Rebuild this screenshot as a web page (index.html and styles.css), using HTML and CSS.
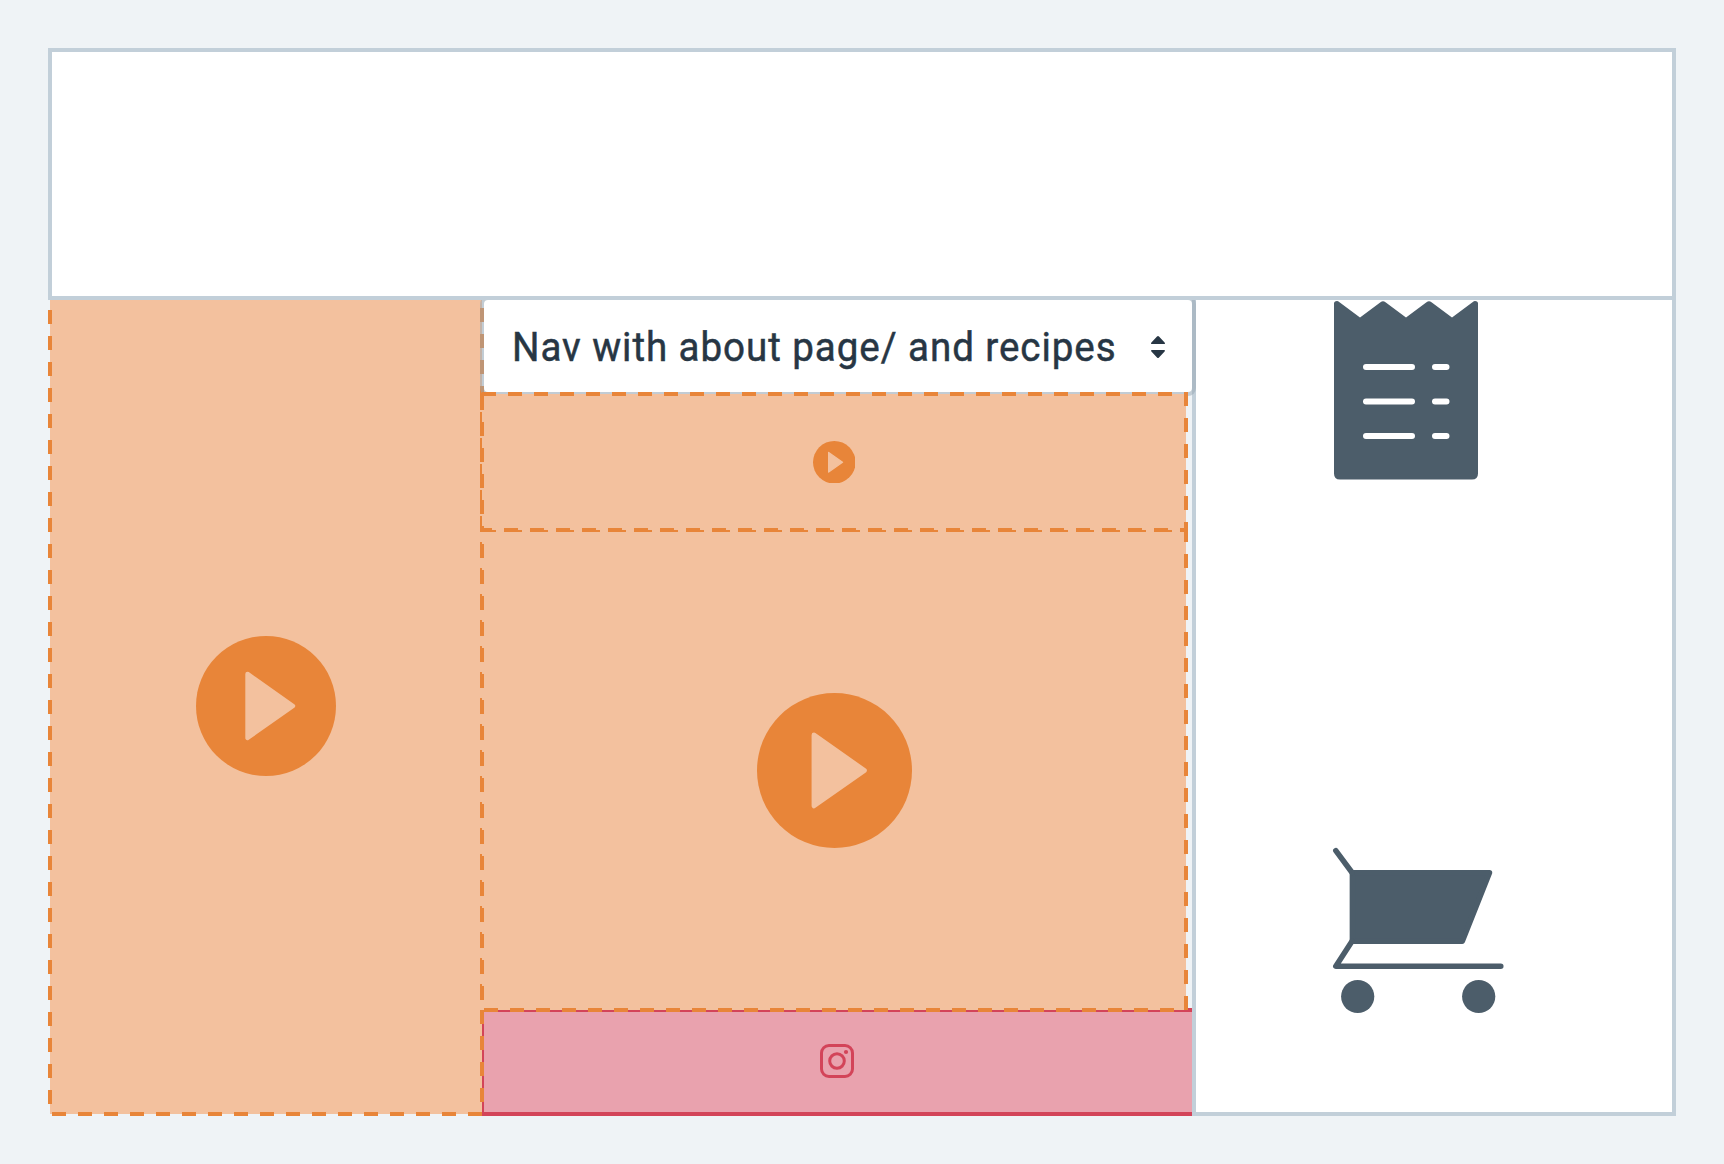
FILE: index.html
```html
<!DOCTYPE html>
<html lang="en">
<head>
<meta charset="utf-8">
<title>Wireframe</title>
<link rel="stylesheet" href="styles.css">
</head>
<body>
<svg class="defs" width="0" height="0" aria-hidden="true">
  <symbol id="play" viewBox="0 0 140 140">
    <circle class="play-disc" cx="70" cy="70" r="70"/>
    <path class="play-arrow" d="M51.5 37.9 97 70 51.5 101.9Z"/>
  </symbol>
</svg>
<main class="board">
  <header class="banner"></header>
  <div class="body">
    <section class="panel video side">
      <svg class="dashes" width="432" height="814">
        <path d="M0 10V814"/>
        <path d="M432 8V814"/>
        <path d="M2 814H432"/>
      </svg>
      <svg class="play" width="140" height="140"><use href="#play"/></svg>
    </section>
    <div class="middle">
      <nav class="select">
        <span class="select-label">Nav with about page/ and recipes</span>
        <svg class="caret" width="14" height="22" viewBox="0 0 14 22">
          <path d="M6 .5Q7-.5 8 .5L13.6 6.5Q14.6 8 13 8H1Q-.6 8 .4 6.5ZM6 21.5Q7 22.5 8 21.5L13.6 15.5Q14.6 14 13 14H1Q-.6 14 .4 15.5Z"/>
        </svg>
      </nav>
      <section class="panel video strip">
        <svg class="dashes" width="704" height="136">
          <path d="M0 0H704"/>
          <path d="M0 2V136"/>
          <path class="clipped" d="M-2 136H706"/>
          <path d="M704 -2V136"/>
        </svg>
        <svg class="play" width="42.6" height="42.6"><use href="#play"/></svg>
      </section>
      <section class="panel video feature">
        <svg class="dashes" width="704" height="480">
          <path d="M0 0H704"/>
          <path d="M0 -12V480"/>
          <path d="M2 480H704"/>
          <path d="M704 -2V480"/>
        </svg>
        <svg class="play" width="155" height="155"><use href="#play"/></svg>
      </section>
      <footer class="social">
        <svg class="instagram" width="34" height="34" viewBox="0 0 34 34">
          <rect x="1.5" y="1.5" width="31" height="31" rx="7.5"/>
          <circle cx="17" cy="17" r="7.3"/>
          <circle class="dot" cx="26" cy="8" r="2.1"/>
        </svg>
      </footer>
    </div>
    <aside class="shop">
      <svg class="receipt" width="144" height="179" viewBox="0 0 144 179">
        <path class="paper" d="M0 2.5Q0 0 3 0Q4 0 5.5 1.2L26 16.6 46.5 1.2Q49 -.8 51.5 1.2L72 16.6 92.5 1.2Q95 -.8 97.5 1.2L118 16.6 138.5 1.2Q140 0 141 0Q144 0 144 2.5V172.5Q144 178.5 138 178.5H6Q0 178.5 0 172.5Z"/>
        <path class="lines" d="M32 66H78M101 66H112.5M32 100.5H78M101 100.5H112.5M32 135H78M101 135H112.5"/>
      </svg>
      <svg class="cart" width="172" height="168" viewBox="0 0 172 168">
        <path class="basket" d="M19.4 24.8H156.5L129.3 93.2H19.4Z"/>
        <path class="frame" d="M2.8 2.6 19 24.5M19 93.2 2.8 118.2H167.800"/>
        <circle cx="24.7" cy="148.5" r="16.6"/>
        <circle cx="145.7" cy="148.5" r="16.6"/>
      </svg>
    </aside>
  </div>
</main>
</body>
</html>
```
FILE: styles.css
```css
* { box-sizing: border-box; }

body {
  margin: 0;
  padding: 48px;
  height: 1164px;
  background: #eff3f6;
  font-family: Roboto, "Open Sans", sans-serif;
  overflow: hidden;
}

.defs { display: block; }

.board {
  display: flex;
  flex-direction: column;
  width: 1628px;
  height: 1068px;
}

.banner {
  position: relative;
  z-index: 6;
  height: 252px;
  flex: none;
  background: #fff;
  border: 4px solid #c2cfd9;
}

.body {
  display: flex;
  height: 816px;
  padding-left: 2px;
}

.panel {
  position: relative;
  display: flex;
  align-items: center;
  justify-content: center;
}

.video { background: #f3c19e; }

.dashes {
  position: absolute;
  inset: 0;
  overflow: visible;
  fill: none;
  stroke: #e88539;
  stroke-width: 4;
  stroke-dasharray: 14 12;
}
.clipped { stroke-dashoffset: 2; }

.play { display: block; }
.play-disc { fill: #e88539; }
.play-arrow {
  fill: #f3c19e;
  stroke: #f3c19e;
  stroke-width: 4.4;
  stroke-linejoin: round;
}

.side {
  z-index: 2;
  width: 432px;
  height: 814px;
  flex: none;
  padding-bottom: 2px;
}

.middle {
  display: flex;
  flex-direction: column;
  width: 710px;
  flex: none;
}

.select {
  position: relative;
  z-index: 3;
  display: flex;
  align-items: center;
  justify-content: space-between;
  flex: none;
  height: 100px;
  margin: -4px -4px -2px -2px;
  padding: 2px 27px 0 28px;
  color: #273644;
  background: #fff;
  background-clip: padding-box;
  border: 4px solid rgba(150, 165, 178, .5);
  border-radius: 8px;
}

.select-label {
  width: 606px;
  font-size: 41px;
  line-height: 48px;
  letter-spacing: 1px;
  white-space: nowrap;
  -webkit-text-stroke: 0.5px #273644;
  transform: scaleX(.94);
  transform-origin: left;
}

.caret { flex: none; fill: #273644; }

.strip {
  z-index: 5;
  width: 704px;
  height: 136px;
  flex: none;
}

.feature {
  z-index: 4;
  width: 704px;
  height: 480px;
  flex: none;
}

.social {
  position: relative;
  z-index: 1;
  display: flex;
  align-items: center;
  justify-content: center;
  flex: none;
  height: 108px;
  margin: -2px 0 0 -2px;
  padding: 0 2px 2px 0;
  background: #e9a2ae;
  border: 4px solid #d34459;
  border-right: 0;
}

.instagram {
  fill: none;
  stroke: #d34459;
  stroke-width: 3;
}
.instagram .dot { fill: #d34459; stroke: none; }

.shop {
  display: flex;
  flex-direction: column;
  align-items: flex-start;
  gap: 367.5px;
  flex: 1;
  padding: 1px 0 0 136px;
  background: #fff;
  border: 4px solid #c2cfd9;
  border-top: 0;
}

.receipt, .cart { flex: none; fill: #4c5d6a; }
.receipt { margin-left: 2px; }
.cart { margin-left: 0.5px; overflow: visible; }
.lines { stroke: #fff; stroke-width: 6; stroke-linecap: round; }
.basket, .frame {
  stroke: #4c5d6a;
  stroke-width: 5.5;
  stroke-linecap: round;
  stroke-linejoin: round;
}
.frame { fill: none; }
```
